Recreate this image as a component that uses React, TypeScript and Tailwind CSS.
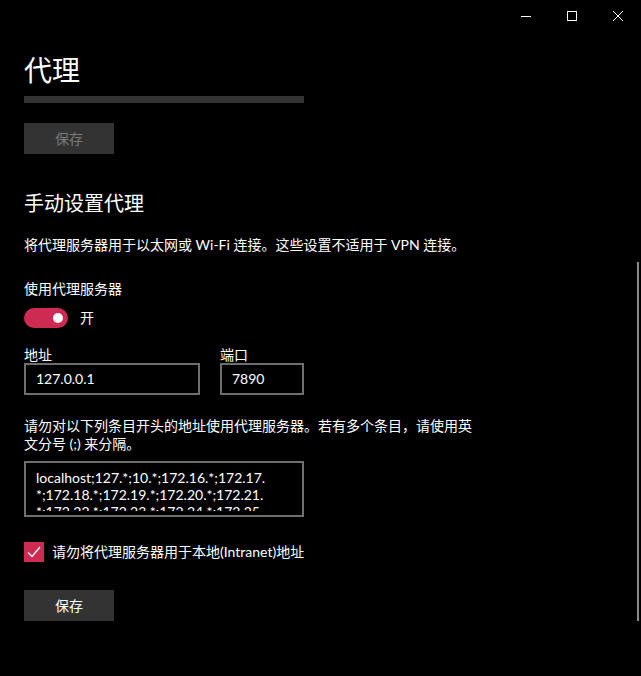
import { useState } from "react";

const font = "font-['Lato','Noto_Sans_CJK_SC',sans-serif]";

function TitleBar() {
  return (
    <div className="flex h-8 justify-end text-white">
      <div className="flex w-[46px] items-center justify-center">
        <svg width="10" height="10" viewBox="0 0 10 10">
          <path d="M0 5.5h10" stroke="currentColor" strokeWidth="1" />
        </svg>
      </div>
      <div className="flex w-[46px] items-center justify-center">
        <svg width="10" height="10" viewBox="0 0 10 10">
          <rect x="0.5" y="0.5" width="9" height="9" fill="none" stroke="currentColor" strokeWidth="1" />
        </svg>
      </div>
      <div className="flex w-[46px] items-center justify-center">
        <svg width="10" height="10" viewBox="0 0 10 10">
          <path d="M0 0L10 10M10 0L0 10" stroke="currentColor" strokeWidth="1" />
        </svg>
      </div>
    </div>
  );
}

export default function App() {
  const [on, setOn] = useState(true);
  const [bypassLocal, setBypassLocal] = useState(true);

  return (
    <div className={`relative h-[676px] w-[641px] overflow-hidden bg-black text-white ${font}`}>
      <TitleBar />

      <div className="px-6">
        {/* Page title */}
        <h1 className="mt-[21px] text-[28px] leading-[34px] font-normal">代理</h1>
        <div className="mt-[9px] h-[7px] w-[280px] bg-[#333333]" />
        <button className="mt-[20px] flex h-[31px] w-[90px] items-center justify-center bg-[#333333] text-sm text-[#7a7a7a]">
          保存
        </button>

        {/* Manual proxy */}
        <h2 className="mt-[35px] text-[20px] leading-[28px] font-normal">手动设置代理</h2>
        <p className="mt-[18px] text-sm leading-5">
          将代理服务器用于以太网或 Wi-Fi 连接。这些设置不适用于 VPN 连接。
        </p>

        <p className="mt-[24px] text-sm leading-5">使用代理服务器</p>
        <div className="mt-[9px] flex items-center gap-3">
          <button
            onClick={() => setOn(!on)}
            className={`flex h-5 w-11 items-center rounded-full px-[5px] ${on ? "justify-end bg-[#cf2a52]" : "justify-start border-2 border-white bg-black"}`}
          >
            <span className="h-[10px] w-[10px] rounded-full bg-white" />
          </button>
          <span className="text-sm">{on ? "开" : "关"}</span>
        </div>

        <div className="mt-[18px] flex gap-5">
          <div>
            <p className="text-sm leading-[17px]">地址</p>
            <div className="flex h-8 w-[176px] items-center border-2 border-[#6e6e6e] px-[10px] text-sm">
              127.0.0.1
            </div>
          </div>
          <div>
            <p className="text-sm leading-[17px]">端口</p>
            <div className="flex h-8 w-[84px] items-center border-2 border-[#6e6e6e] px-[10px] text-sm">
              7890
            </div>
          </div>
        </div>

        <p className="mt-[22px] w-[452px] text-sm leading-[18px]">
          请勿对以下列条目开头的地址使用代理服务器。若有多个条目，请使用英文分号 (;) 来分隔。
        </p>

        <div className="mt-[8px] h-14 w-[280px] border-2 border-[#6e6e6e] px-[10px] pt-[6px]">
          <div className="h-[42px] overflow-hidden text-sm leading-[17px]">
            <div className="whitespace-nowrap">localhost;127.*;10.*;172.16.*;172.17.</div>
            <div className="whitespace-nowrap">*;172.18.*;172.19.*;172.20.*;172.21.</div>
            <div className="whitespace-nowrap">*;172.22.*;172.23.*;172.24.*;172.25.</div>
          </div>
        </div>

        <label className="mt-[25px] flex items-center gap-2 text-sm" onClick={() => setBypassLocal(!bypassLocal)}>
          <span className={`flex h-5 w-5 items-center justify-center ${bypassLocal ? "bg-[#cf2a52]" : "border-2 border-white"}`}>
            {bypassLocal && (
              <svg width="14" height="12" viewBox="0 0 14 12">
                <path d="M1 6.5L5 10.5L13 1" fill="none" stroke="white" strokeWidth="1.3" />
              </svg>
            )}
          </span>
          请勿将代理服务器用于本地(Intranet)地址
        </label>

        <button className="mt-[28px] flex h-[31px] w-[90px] items-center justify-center bg-[#333333] text-sm text-white">
          保存
        </button>

        <h2 className="mt-[52px] text-[20px] leading-[28px] font-normal">有疑问?</h2>
      </div>

      {/* scrollbar */}
      <div className="absolute top-[262px] right-[2px] h-[359px] w-[2px] bg-[#8a8a8a]" />
    </div>
  );
}
